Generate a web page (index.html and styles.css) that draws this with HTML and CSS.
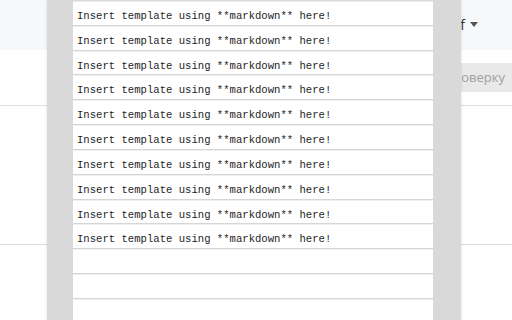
FILE: index.html
```html
<!DOCTYPE html>
<html>
<head>
<meta charset="utf-8">
<link rel="stylesheet" href="styles.css">
</head>
<body>
<div class="page">
  <div class="header">
    <span class="user">Graf</span>
    <span class="caret"></span>
  </div>
  <div class="toolbar">
    <span class="btn">Отправить на проверку</span>
  </div>
  <div class="content"></div>
  <div class="divider"></div>
</div>
<div class="modal">
  <div class="rows">
    <div class="row">Insert template using **markdown** here!</div>
    <div class="row">Insert template using **markdown** here!</div>
    <div class="row">Insert template using **markdown** here!</div>
    <div class="row">Insert template using **markdown** here!</div>
    <div class="row">Insert template using **markdown** here!</div>
    <div class="row">Insert template using **markdown** here!</div>
    <div class="row">Insert template using **markdown** here!</div>
    <div class="row">Insert template using **markdown** here!</div>
    <div class="row">Insert template using **markdown** here!</div>
    <div class="row">Insert template using **markdown** here!</div>
    <div class="row"></div>
    <div class="row"></div>
    <div class="row"></div>
  </div>
</div>
</body>
</html>
```
FILE: styles.css
```css
html, body {
  margin: 0;
  padding: 0;
  width: 512px;
  height: 320px;
  overflow: hidden;
  background: #ffffff;
  font-family: "Open Sans", "Liberation Sans", sans-serif;
}
.page {
  display: flex;
  flex-direction: column;
  width: 512px;
}
.header {
  height: 50px;
  background: #f7f8fa;
  display: flex;
  align-items: center;
  justify-content: flex-end;
  padding-right: 34px;
  gap: 5px;
  box-sizing: border-box;
}
.user {
  font-size: 14px;
  color: #333;
  position: relative;
  top: -1px;
}
.caret {
  width: 0;
  height: 0;
  border-left: 4.5px solid transparent;
  border-right: 4.5px solid transparent;
  border-top: 5px solid #555;
  position: relative;
  top: -1px;
}
.toolbar {
  height: 56px;
  display: flex;
  justify-content: flex-end;
  align-items: flex-start;
  padding-top: 13px;
  box-sizing: border-box;
  border-bottom: 1px solid #dedede;
}
.btn {
  background: #e9e9e9;
  color: #a0a0a0;
  font-size: 13px;
  height: 29px;
  line-height: 29px;
  padding: 0 7px 0 14px;
  white-space: nowrap;
}
.content {
  height: 138px;
}
.divider {
  border-top: 1px solid #dcdcdc;
}
.modal {
  position: absolute;
  left: 47px;
  top: 0;
  width: 414px;
  height: 320px;
  box-sizing: border-box;
  background: #d9d9d9;
  padding: 1px 28px 0 26px;
  box-shadow: 0 0 3px rgba(0, 0, 0, 0.12);
}
.rows {
  display: flex;
  flex-direction: column;
  background: #ffffff;
}
.row {
  height: 24.82px;
  flex: none;
  box-sizing: border-box;
  border-top: 1px solid #f0f0f0;
  border-bottom: 1px solid #d6d6d6;
  padding: 8px 4px 0;
  font-family: "Liberation Mono", "Courier New", monospace;
  font-size: 10.6px;
  line-height: 12px;
  color: #1e1e1e;
  white-space: pre;
}
.row:first-child {
  border-top: 1px solid #ececec;
}
```
